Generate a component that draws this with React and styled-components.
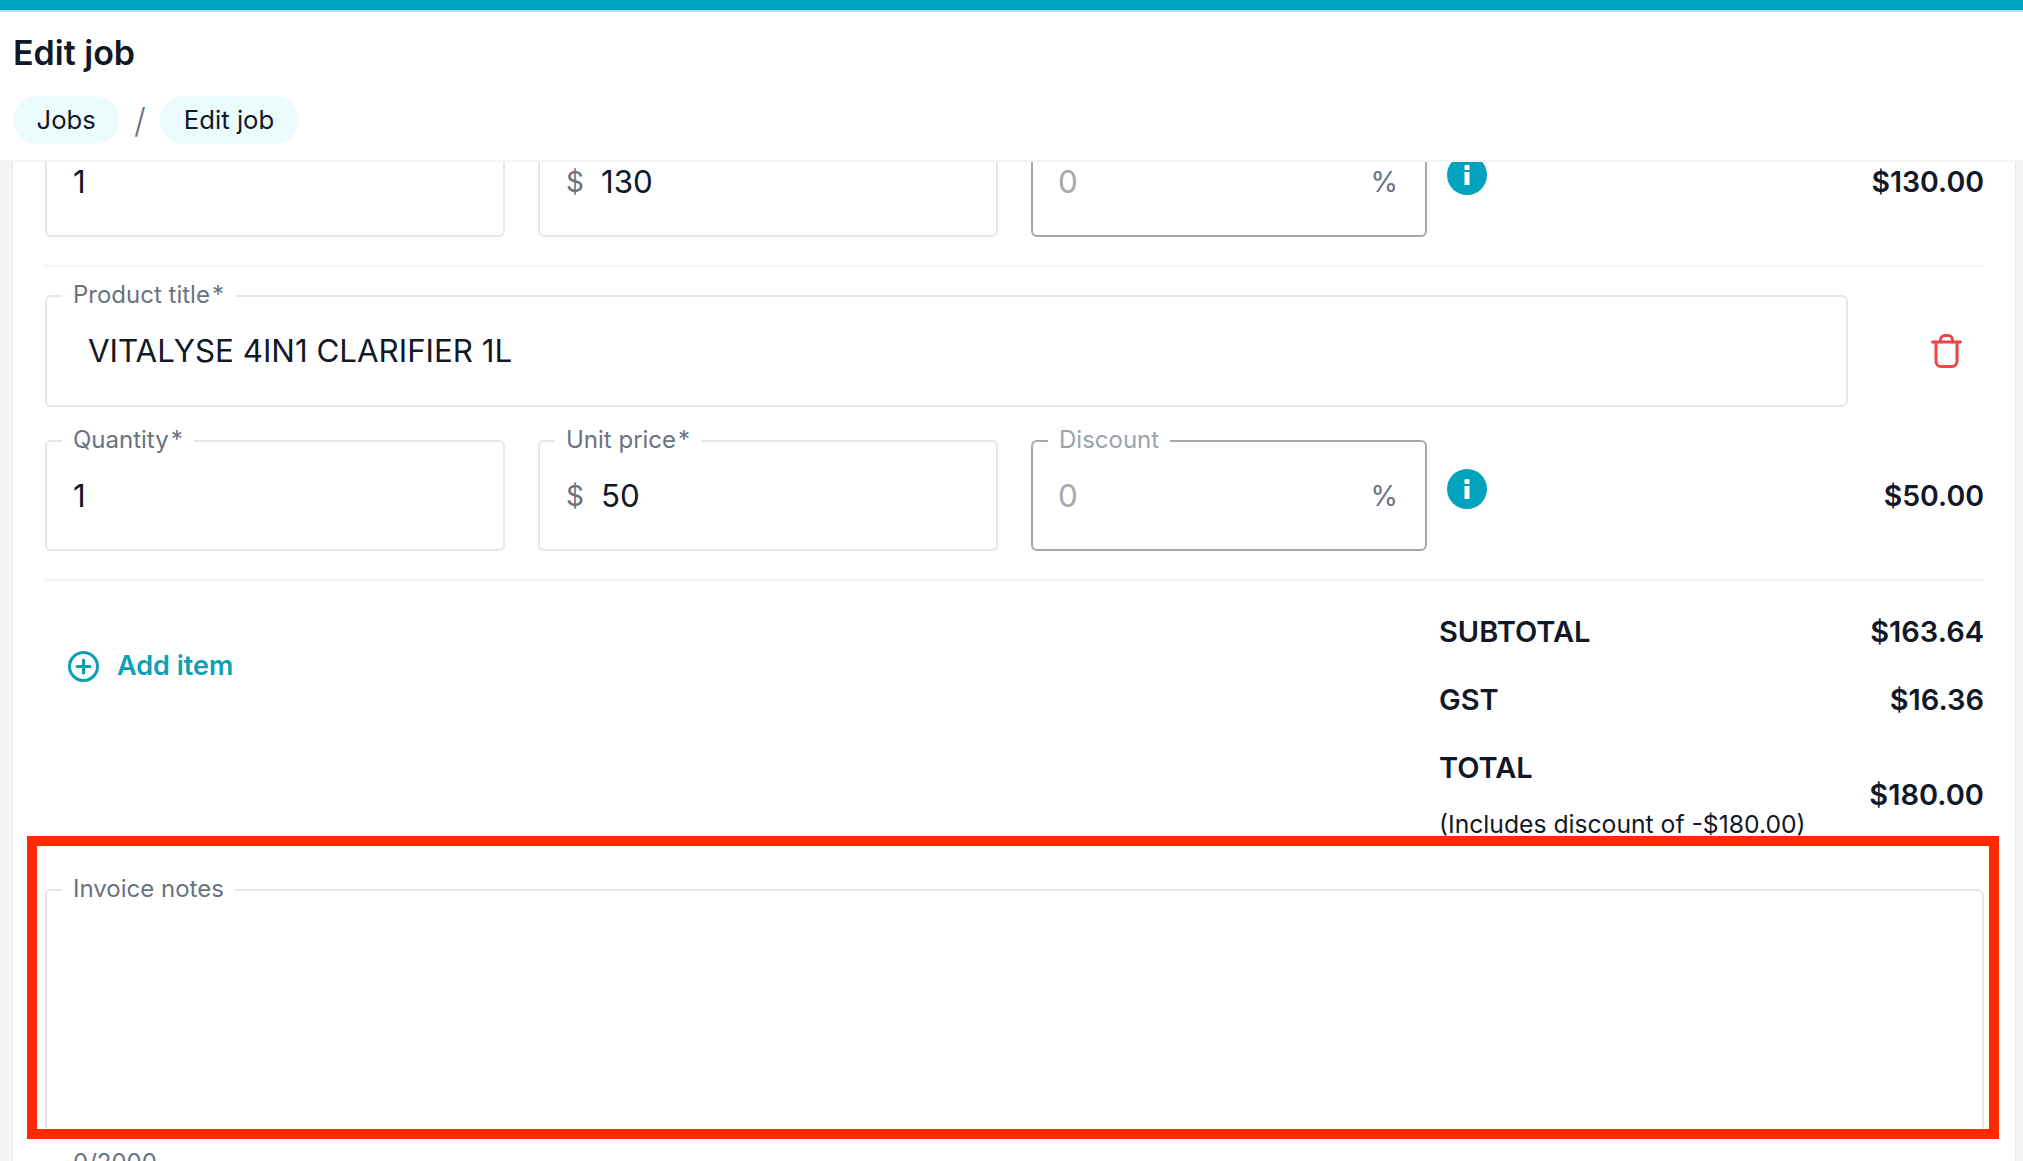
import React from "react";
import styled, { createGlobalStyle } from "styled-components";

const Global = createGlobalStyle`
  html, body { margin: 0; padding: 0; background: #fff; }
  body { font-family: Inter, "Liberation Sans", sans-serif; color: #111827; }
  * { box-sizing: border-box; }
`;

const Page = styled.div`
  position: relative;
  width: 2023px;
  height: 1161px;
  display: flex;
  flex-direction: column;
  overflow: hidden;
`;

const TopBar = styled.div`
  height: 12px;
  flex: none;
  background: #00a3bd;
  border-bottom: 2px solid #b5dfe6;
`;

const Header = styled.header`
  flex: none;
  height: 150px;
  padding: 21px 13px 0;
  background: #fff;
  border-bottom: 2px solid #f3f4f6;
`;

const Title = styled.h1`
  margin: 0;
  height: 40px;
  font-size: 34px;
  line-height: 40px;
  font-weight: 600;
  color: #111827;
`;

const Crumbs = styled.nav`
  margin-top: 23px;
  display: flex;
  align-items: center;
`;

const Crumb = styled.span`
  height: 48px;
  padding: 0 23.5px;
  display: flex;
  align-items: center;
  border-radius: 24px;
  background: #ecfbfe;
  font-size: 25.7px;
  line-height: 46px;
  color: #111827;
`;

const Slash = styled.span`
  width: 41px;
  text-align: center;
  font-size: 34px;
  font-weight: 300;
  color: #6b7280;
`;

const Main = styled.main`
  flex: 1;
  min-height: 0;
  display: flex;
  background: #f3f4f6;
  padding: 0 7px 0 12px;
`;

const Card = styled.section`
  flex: 1;
  min-width: 0;
  background: #fff;
  border-left: 1px solid #e8e9ec;
  border-right: 1px solid #e8e9ec;
  overflow: hidden;
`;

const Content = styled.div`
  margin-top: -36px;
  padding: 0 31px 0 32px;
`;

const FieldBox = styled.div`
  position: relative;
  flex: none;
  width: ${(p) => p.$width || "auto"};
  height: ${(p) => p.$height || "111px"};
  display: flex;
  align-items: center;
  gap: 17px;
  padding: 0 27px 0 ${(p) => (p.$muted ? "25px" : "26px")};
  border: 2px solid ${(p) => (p.$muted ? "#a6a8ac" : "#e5e7eb")};
  border-radius: 6px;
  font-size: 31.3px;
`;

const FieldLabel = styled.span`
  position: absolute;
  top: -17px;
  left: 15px;
  padding: 0 11px;
  background: #fff;
  font-size: 24px;
  line-height: 29px;
  white-space: nowrap;
  color: ${(p) => (p.$muted ? "#9ca3af" : "#6b7280")};
`;

const Required = styled.span`
  margin-left: 2px;
`;

const Value = styled.span`
  flex: 1;
  padding-left: ${(p) => (p.$inset ? "15px" : "0")};
  color: ${(p) => (p.$muted ? "#a5a9b0" : "#111827")};
`;

const Affix = styled.span`
  color: #6b7280;
  font-size: 28px;
`;

const ItemRow = styled.div`
  display: flex;
  align-items: center;
  gap: 33px;
  margin-top: ${(p) => p.$top || "0"};
`;

const ItemDivider = styled.hr`
  margin: ${(p) => p.$margin};
  height: 2px;
  border: 0;
  background: #f3f4f6;
`;

const InfoButton = styled.span`
  width: 40px;
  height: 40px;
  flex: none;
  margin: -14px 0 0 -13px;
  display: flex;
`;

const Amount = styled.span`
  flex: 1;
  text-align: right;
  font-size: 28.5px;
  font-weight: 600;
  color: #111827;
`;

const TrashButton = styled.span`
  flex: 1;
  display: flex;
  justify-content: flex-end;
  padding-right: 22px;
  color: #ef4444;
`;

const TotalsArea = styled.div`
  display: flex;
  justify-content: space-between;
  align-items: flex-start;
`;

const AddItem = styled.div`
  margin: 65px 0 0 23px;
  display: flex;
  align-items: center;
  gap: 18px;
  font-size: 27px;
  font-weight: 600;
  line-height: 40px;
  color: #0e9fb5;
`;

const Totals = styled.div`
  width: 545px;
  margin-top: 34px;
  display: flex;
  flex-direction: column;
  gap: 34px;
`;

const TotalRow = styled.div`
  display: flex;
  justify-content: space-between;
  align-items: center;
  font-size: 29px;
  line-height: 34px;
  font-weight: 600;
`;

const TotalLabel = styled.div`
  display: flex;
  flex-direction: column;
  gap: 24px;
`;

const DiscountNote = styled.span`
  font-size: 24.7px;
  line-height: 30px;
  font-weight: 400;
`;

const Notes = styled.div`
  margin-top: 50px;
`;

const Counter = styled.div`
  margin: 16px 0 0 28px;
  font-size: 24px;
  line-height: 28px;
  color: #6b7280;
`;

const Annotation = styled.div`
  position: absolute;
  left: 27px;
  top: 836px;
  width: 1972px;
  height: 303px;
  border: 10px solid #ff2a00;
`;

const InfoIcon = () => (
  <svg width="40" height="40" viewBox="0 0 40 40" aria-hidden="true">
    <circle cx="20" cy="20" r="20" fill="#00a3bd" />
    <rect x="17.5" y="17" width="5" height="13" fill="#fff" />
    <rect x="17.5" y="10" width="5" height="5" rx="1" fill="#fff" />
  </svg>
);

const TrashIcon = () => (
  <svg width="31" height="34" viewBox="0 0 31 34" fill="none" stroke="currentColor" strokeWidth="3" strokeLinecap="round" strokeLinejoin="round" aria-hidden="true">
    <path d="M1.5 8h28" />
    <path d="M5 8v19.5a5 5 0 0 0 5 5h11a5 5 0 0 0 5-5V8" />
    <path d="M9.5 8V6a4.5 4.5 0 0 1 4.5-4.5h3A4.5 4.5 0 0 1 21.5 6v2" />
  </svg>
);

const PlusIcon = () => (
  <svg width="31" height="31" viewBox="0 0 31 31" fill="none" stroke="currentColor" strokeWidth="3" strokeLinecap="round" aria-hidden="true">
    <circle cx="15.5" cy="15.5" r="14" />
    <path d="M15.5 9v13M9 15.5h13" />
  </svg>
);

const Label = ({ children, required, muted }) => (
  <FieldLabel $muted={muted}>
    {children}
    {required && <Required>*</Required>}
  </FieldLabel>
);

const QuantityRow = ({ qty, price, amount, labelled, top }) => (
  <ItemRow $top={top}>
    <FieldBox $width="460px">
      {labelled && <Label required>Quantity</Label>}
      <Value>{qty}</Value>
    </FieldBox>
    <FieldBox $width="460px">
      {labelled && <Label required>Unit price</Label>}
      <Affix>$</Affix>
      <Value>{price}</Value>
    </FieldBox>
    <FieldBox $width="396px" $muted>
      {labelled && <Label muted>Discount</Label>}
      <Value $muted>0</Value>
      <Affix>%</Affix>
    </FieldBox>
    <InfoButton><InfoIcon /></InfoButton>
    <Amount>{amount}</Amount>
  </ItemRow>
);

export default function App() {
  return (
    <Page>
      <Global />
      <TopBar />
      <Header>
        <Title>Edit job</Title>
        <Crumbs>
          <Crumb>Jobs</Crumb>
          <Slash>/</Slash>
          <Crumb>Edit job</Crumb>
        </Crumbs>
      </Header>
      <Main>
        <Card>
          <Content>
            <QuantityRow qty="1" price="130" amount="$130.00" />
            <ItemDivider $margin="28px 0 28px" />
            <ItemRow>
              <FieldBox $width="1803px" $height="112px">
                <Label required>Product title</Label>
                <Value $inset>VITALYSE 4IN1 CLARIFIER 1L</Value>
              </FieldBox>
              <TrashButton><TrashIcon /></TrashButton>
            </ItemRow>
            <QuantityRow qty="1" price="50" amount="$50.00" labelled top="33px" />
            <ItemDivider $margin="28px 0 0" />
            <TotalsArea>
              <AddItem><PlusIcon />Add item</AddItem>
              <Totals>
                <TotalRow><span>SUBTOTAL</span><span>$163.64</span></TotalRow>
                <TotalRow><span>GST</span><span>$16.36</span></TotalRow>
                <TotalRow>
                  <TotalLabel>
                    <span>TOTAL</span>
                    <DiscountNote>(Includes discount of -$180.00)</DiscountNote>
                  </TotalLabel>
                  <span>$180.00</span>
                </TotalRow>
              </Totals>
            </TotalsArea>
            <Notes>
              <FieldBox $height="244px">
                <Label>Invoice notes</Label>
              </FieldBox>
              <Counter>0/2000</Counter>
            </Notes>
          </Content>
        </Card>
      </Main>
      <Annotation />
    </Page>
  );
}
